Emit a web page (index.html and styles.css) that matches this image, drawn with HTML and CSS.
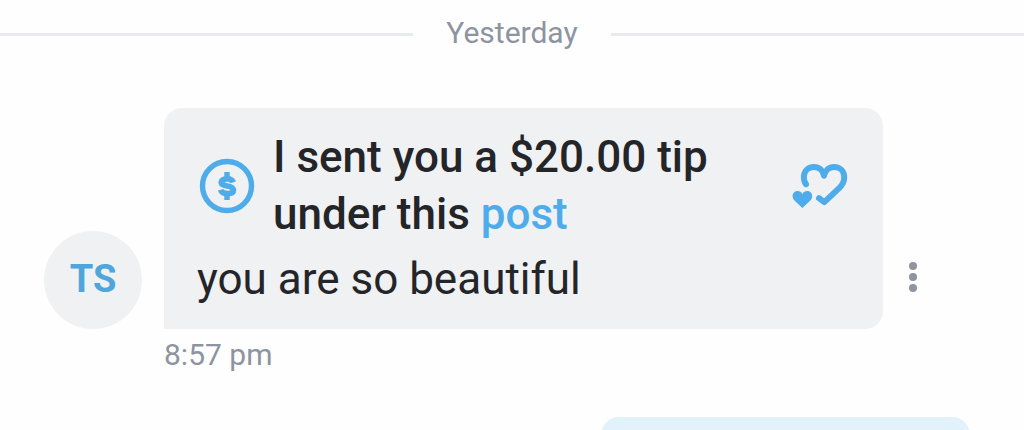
FILE: index.html
```
<!DOCTYPE html>
<html lang="en">
<head>
  <meta charset="utf-8">
  <title>Messages</title>
  <meta name="viewport" content="width=device-width, initial-scale=1">
  <link rel="stylesheet" href="styles.css">
</head>
<body>
  <main class="chat">
    <div class="day-divider"><span>Yesterday</span></div>

    <article class="message">
      <div class="message-row">
        <div class="avatar">TS</div>
        <div class="bubble">
          <div class="tip">
            <svg class="tip-icon" viewBox="0 0 60 56" fill="none" stroke="currentColor" aria-hidden="true">
              <circle cx="30" cy="28" r="24.5" stroke-width="5.4"/>
              <path d="M36.2 24.4C35.4 21.7 33.4 20.8 30.2 20.8C26.9 20.8 24.4 22 24.4 24.2C24.4 26.7 26.8 27.3 30.3 28C34 28.7 36.4 29.6 36.4 32C36.4 34.4 34 35.6 30.5 35.6C26.8 35.6 24.5 34.6 23.7 31.8" stroke-width="5.8"/>
              <path d="M30 14v6M30 36v6" stroke-width="5.4"/>
            </svg>
            <p class="tip-text">I sent you a $20.00 tip under this <a href="#post">post</a></p>
            <svg class="hearts-icon" viewBox="0 0 60 56" aria-hidden="true">
              <path d="M16 26.2C14.2 23.6 13.6 21 13.9 18C14.5 12.8 18.6 9 23.9 9C29 9 33 12.4 34 17.8C35.2 12.4 39 9 44.2 9C50 9 54.2 13.2 54.2 19.4C54.2 23.6 52.6 26.6 49.4 29.8L34.3 44.2L29 40.2" fill="none" stroke="currentColor" stroke-width="6" stroke-linecap="round" stroke-linejoin="round"/>
              <path d="M12.4 50L4.7 42.7C3.1 41.1 2.6 39.7 2.6 38C2.6 35.2 4.8 33 7.5 33C9.7 33 11.6 34.2 12.4 36.2C13.2 34.2 15.1 33 17.3 33C20 33 22.2 35.2 22.2 38C22.2 39.7 21.7 41.1 20.1 42.7Z" fill="currentColor"/>
            </svg>
          </div>
          <p class="message-text">you are so beautiful</p>
        </div>
        <button class="menu-button" type="button" aria-label="Message options">
          <svg width="10" height="32" viewBox="0 0 10 32" fill="currentColor" aria-hidden="true">
            <circle cx="5" cy="5" r="4"/>
            <circle cx="5" cy="16" r="4"/>
            <circle cx="5" cy="27" r="4"/>
          </svg>
        </button>
      </div>
      <time class="message-time">8:57 pm</time>
    </article>

    <article class="message-own">
      <div class="bubble-own"></div>
    </article>
  </main>
</body>
</html>
```

FILE: styles.css
```
* { box-sizing: border-box; }
body {
  margin: 0;
  background-color: #fefefe;
  color: #242529;
  font-family: Roboto, "Liberation Sans", sans-serif;
}
p { margin: 0; }
a { color: #4facea; text-decoration: none; }

.chat { height: 100vh; overflow: hidden; }

.day-divider {
  display: flex;
  align-items: center;
  gap: 33px;
  padding-top: 15px;
  color: #8d94a1;
  font-size: 30px;
  line-height: 36px;
}
.day-divider::before,
.day-divider::after {
  content: "";
  flex: 1;
  height: 3px;
  margin-top: 3px;
  background-color: #e9eaf0;
}

.message { padding: 57px 81px 44px 44px; }
.message-row { display: flex; align-items: flex-end; }
.avatar {
  flex: none;
  width: 98px;
  height: 98px;
  margin-right: 22px;
  border-radius: 50%;
  background-color: #f0f1f3;
  color: #4ea6dc;
  font-size: 38px;
  font-weight: 700;
  line-height: 96px;
  text-align: center;
}
.bubble {
  flex: 1;
  padding: 21px 33px;
  border-radius: 18px 18px 18px 0;
  background-color: #f0f1f3;
  font-size: 44px;
  line-height: 57px;
}
.tip {
  display: flex;
  align-items: center;
  gap: 16px;
  margin-bottom: 8px;
}
.tip-text { flex: 1; font-weight: 500; }
.tip-icon,
.hearts-icon {
  flex: none;
  width: 60px;
  height: 56px;
  color: #4facea;
}

.menu-button {
  display: flex;
  align-items: center;
  justify-content: center;
  width: 60px;
  height: 104px;
  padding: 0;
  border: none;
  background: none;
  color: #8f949f;
  cursor: pointer;
}
.message-time {
  display: block;
  margin: 8px 0 0 120px;
  color: #8d94a1;
  font-size: 30px;
  line-height: 36px;
}

.message-own {
  display: flex;
  justify-content: flex-end;
  padding-right: 54px;
}
.bubble-own {
  width: 38%;
  height: 100px;
  border-radius: 18px 18px 0 18px;
  background-color: #e2f2fb;
}
```
